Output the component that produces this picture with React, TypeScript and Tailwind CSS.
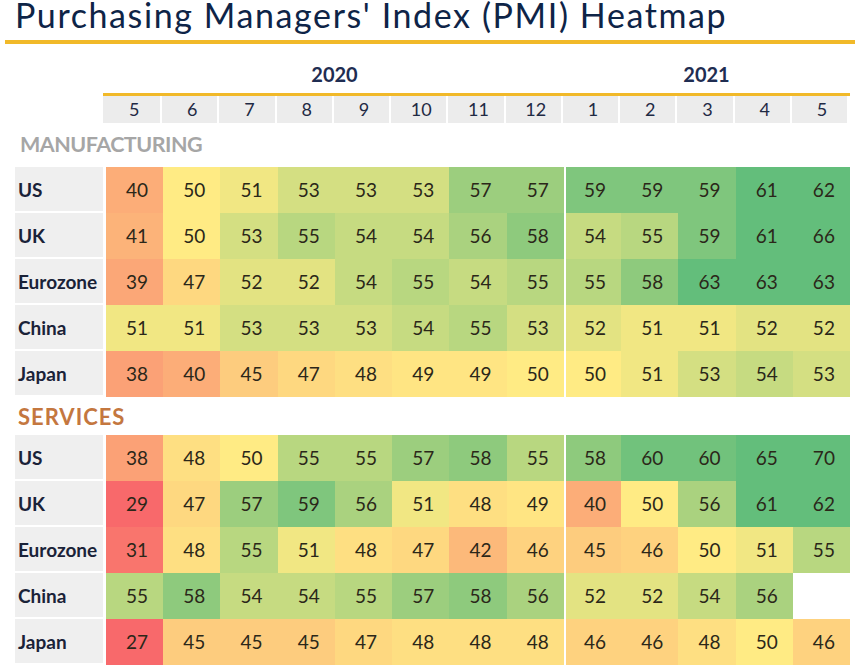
import React from "react";

type Row = { name: string; values: (number | null)[] };

const months = [5, 6, 7, 8, 9, 10, 11, 12, 1, 2, 3, 4, 5];

const manufacturing: Row[] = [
  { name: "US", values: [40, 50, 51, 53, 53, 53, 57, 57, 59, 59, 59, 61, 62] },
  { name: "UK", values: [41, 50, 53, 55, 54, 54, 56, 58, 54, 55, 59, 61, 66] },
  { name: "Eurozone", values: [39, 47, 52, 52, 54, 55, 54, 55, 55, 58, 63, 63, 63] },
  { name: "China", values: [51, 51, 53, 53, 53, 54, 55, 53, 52, 51, 51, 52, 52] },
  { name: "Japan", values: [38, 40, 45, 47, 48, 49, 49, 50, 50, 51, 53, 54, 53] },
];

const services: Row[] = [
  { name: "US", values: [38, 48, 50, 55, 55, 57, 58, 55, 58, 60, 60, 65, 70] },
  { name: "UK", values: [29, 47, 57, 59, 56, 51, 48, 49, 40, 50, 56, 61, 62] },
  { name: "Eurozone", values: [31, 48, 55, 51, 48, 47, 42, 46, 45, 46, 50, 51, 55] },
  { name: "China", values: [55, 58, 54, 54, 55, 57, 58, 56, 52, 52, 54, 56, null] },
  { name: "Japan", values: [27, 45, 45, 45, 47, 48, 48, 48, 46, 46, 48, 50, 46] },
];

// Excel-style 3 colour scale: red -> yellow (50) -> green
const RED = [248, 105, 107];
const YELLOW = [255, 235, 132];
const GREEN = [99, 190, 123];

function mix(a: number[], b: number[], t: number) {
  const c = a.map((v, i) => Math.round(v + (b[i] - v) * t));
  return `rgb(${c[0]}, ${c[1]}, ${c[2]})`;
}

function heat(v: number) {
  if (v <= 50) return mix(RED, YELLOW, Math.max(0, (v - 29) / 21));
  return mix(YELLOW, GREEN, Math.min(1, (v - 50) / 11));
}

function HeatRow({ row }: { row: Row }) {
  return (
    <div className="flex h-[46px]">
      <div className="ml-[15px] flex w-[88px] items-center border-b-2 border-white bg-[#efefef] pl-[3px] pt-[3px] text-[19px] font-bold text-[#1a2238]">
        {row.name}
      </div>
      <div className="ml-[3px] grid w-[744px] grid-cols-[repeat(13,minmax(0,1fr))]">
        {row.values.map((v, i) => (
          <div
            key={i}
            className={`flex items-center justify-center pl-[5px] text-[19px] text-[#2b2719] ${i === 8 ? "shadow-[inset_2px_0_0_#ffffff]" : ""}`}
            style={{ backgroundColor: v === null ? "#ffffff" : heat(v) }}
          >
            {v}
          </div>
        ))}
      </div>
    </div>
  );
}

export default function App() {
  return (
    <div className="h-[671px] w-[864px] overflow-hidden bg-white font-['Lato',sans-serif]">
      {/* Title */}
      <div className="h-[40px] pl-[15px] text-[34px] leading-[30px] tracking-[1.6px] text-[#0e2447]">
        Purchasing Managers' Index (PMI) Heatmap
      </div>
      <div className="ml-[5px] h-[4px] w-[850px] bg-[#f1b929]" />

      {/* Years */}
      <div className="flex h-[49px] pt-[20px] text-[20px] font-bold leading-[20px] text-[#1f2d52]">
        <div className="ml-[106px] w-[457px] text-center">2020</div>
        <div className="w-[287px] text-center">2021</div>
      </div>
      <div className="ml-[103px] h-[3px] w-[747px] bg-[#f1b929]" />

      {/* Month header */}
      <div className="ml-[103px] grid h-[27px] w-[744px] grid-cols-[repeat(13,minmax(0,1fr))] border-b-2 border-[#cbcbcb]">
        {months.map((m, i) => (
          <div
            key={i}
            className={`flex items-center justify-center bg-[#ececec] pl-[5px] text-[18px] text-[#1f2a44] ${i > 0 ? "border-l-2 border-white" : ""}`}
          >
            {m}
          </div>
        ))}
      </div>

      {/* Manufacturing */}
      <div className="h-[44px] pl-[20px] pt-[10px] text-[21.5px] font-bold leading-[22px] tracking-[-0.5px] text-[#a6a6a6]">
        MANUFACTURING
      </div>
      {manufacturing.map((r) => (
        <HeatRow key={r.name} row={r} />
      ))}

      {/* Services */}
      <div className="h-[38px] pl-[18px] pt-[9px] text-[22px] font-bold leading-[22px] tracking-[1px] text-[#c4773f]">
        SERVICES
      </div>
      {services.map((r) => (
        <HeatRow key={r.name} row={r} />
      ))}
    </div>
  );
}
